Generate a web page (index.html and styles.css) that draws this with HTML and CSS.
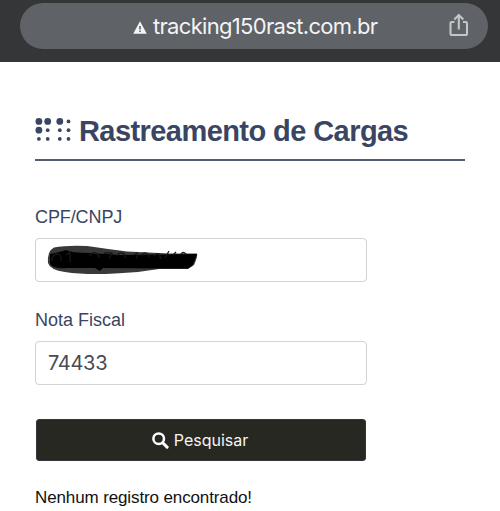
FILE: index.html
```html
<!DOCTYPE html>
<html lang="pt-BR">
<head>
<meta charset="utf-8">
<title>Rastreamento de Cargas</title>
<link rel="stylesheet" href="styles.css">
</head>
<body>
<header class="browser">
  <div class="address">
    <svg class="warning" width="14" height="13" viewBox="0 0 14 13"><path d="M7 .3 13.8 12.7H.2Z" fill="#f3f4f5"/><path d="M6.2 5h1.6v3.6H6.2zM6.2 9.5h1.6V11H6.2z" fill="#5f6267"/></svg>
    <span class="url">tracking150rast.com.br</span>
    <svg class="share" width="20" height="24" viewBox="0 0 20 24" fill="none" stroke="#c3c5c8" stroke-width="2.1" stroke-linejoin="round"><path d="M5.5 9H2.9Q1.5 9 1.5 10.4V20.5Q1.5 22 3 22H16.5Q18 22 18 20.5V10.4Q18 9 16.6 9H14M9.8 16.5V2M5.3 6.4 9.8 1.9 14.3 6.4"/></svg>
  </div>
</header>
<main class="page">
  <h1 class="title">
    <svg class="dots" width="37" height="24" viewBox="0 0 37 24" fill="#3a4563"><circle cx="3.9" cy="3.4" r="3.4"/><circle cx="12.7" cy="3.4" r="3.4"/><circle cx="24.8" cy="3.4" r="3.4"/><circle cx="3.9" cy="12.2" r="3.4"/><circle cx="33.5" cy="3.4" r="1.9"/><circle cx="12.7" cy="12.2" r="1.9"/><circle cx="24.8" cy="12.2" r="1.9"/><circle cx="33.5" cy="12.2" r="1.9"/><circle cx="3.9" cy="20.9" r="1.9"/><circle cx="12.7" cy="20.9" r="1.9"/><circle cx="24.8" cy="20.9" r="1.9"/><circle cx="33.5" cy="20.9" r="1.9"/></svg>
    <span class="title-text">Rastreamento de Cargas</span>
  </h1>
  <div class="label"><span class="cpf">CPF/CNPJ</span></div>
  <div class="field">
    <svg class="scribble" width="152" height="30" viewBox="0 0 152 30">
      <path d="M7 2.5Q20 0 40 1Q62 4 80 6.5L122 8.5L150 8.5Q151 11 147 20L141 24L112 24Q90 28 68 28.5Q38 30 18 27Q3 25 1 18Q0 6 7 2.5Z" fill="#393939"/>
      <path d="M3 9Q13 7 19 5Q24 8 43 8L74 10L150 9L146 20L141 23.5L112 23.5L56 23L53 26L48 23L20 23Q3 24 3 18Z" fill="#000"/>
      <path d="M5 16Q5 9 10 9T14 16M19 10l4-3v10M43 11q1-4 5-3t4 5M57 8h8l-3 6M70 11q1-4 5-3t3 5M87 10l3-2v6M94 11q2-4 5-3t3 4M107 11q3-3 5-2l2 5M118 13l4-7M126 10l3-3M134 9q2-3 5 0" fill="none" stroke="#171717" stroke-width="1.3"/>
    </svg>
  </div>
  <div class="label second"><span class="nota">Nota Fiscal</span></div>
  <div class="field"><span class="value">74433</span></div>
  <button class="search" type="button">
    <svg width="17" height="17" viewBox="0 0 17 17" fill="none" stroke="#fff"><circle cx="6.7" cy="6.7" r="5.3" stroke-width="2.5"/><path d="m10.7 10.7 4.4 4.4" stroke-width="3" stroke-linecap="round"/></svg>
    <span class="search-text">Pesquisar</span>
  </button>
  <p class="message">Nenhum registro encontrado!</p>
</main>
</body>
</html>
```
FILE: styles.css
```css
* { box-sizing: border-box; }
body { margin: 0; height: 511px; overflow: hidden; background: #fff; font-family: "Liberation Sans", sans-serif; color: #3a4563; }
svg { display: block; flex: none; }
span { white-space: nowrap; }
.browser { height: 62px; padding: 3px 12px 0 20px; background: #353638; }
.address { height: 46px; border-radius: 23px; background: #5f6267; display: flex; align-items: center; padding: 0 19px 0 113px; }
.warning { margin-top: 2px; }
.url { margin-left: 6px; font: 22px/30px Inter, sans-serif; letter-spacing: -0.68px; color: #f3f4f5; }
.share { margin-left: auto; margin-top: -3px; }
.page { padding: 46px 35px 0; }
.title { margin: 0; height: 53px; border-bottom: 2px solid #555c70; display: flex; align-items: flex-start; font-size: 29px; line-height: 34px; }
.dots { margin-top: 10px; }
.title-text { margin: 6px 0 0 7px; letter-spacing: -0.57px; }
.label { margin-top: 44px; height: 25px; font-size: 18px; line-height: 24px; }
.cpf { letter-spacing: -0.1px; }
.field { margin-top: 8px; width: 332px; height: 44px; border: 1.5px solid #d2d2d7; border-radius: 4px; display: flex; align-items: center; padding-left: 12px; }
.scribble { margin: -1px 0 0 -1px; }
.label.second { margin-top: 26px; }
.value { font: 20px/26px Inter, sans-serif; letter-spacing: -0.3px; color: #494b50; }
.search { margin: 34px 0 0 1px; width: 330px; height: 42px; padding: 0; border: 1px solid #34353b; border-radius: 3px; background: #282822; color: #f5f5f2; display: flex; justify-content: center; align-items: center; gap: 5px; font: 16px/22px Inter, sans-serif; }
.search svg { margin-left: -2px; }
.message { margin: 25px 0 0; font-size: 17px; line-height: 24px; letter-spacing: -0.12px; color: #111; }
```
